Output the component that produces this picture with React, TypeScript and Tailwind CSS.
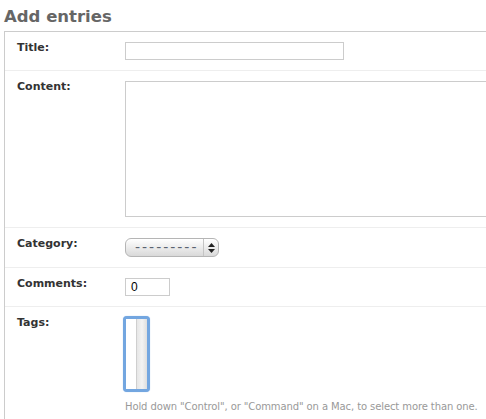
import * as React from "react";

function FormRow(props: { label: string; children: React.ReactNode; last?: boolean }) {
  return (
    <div
      className={
        "flex pl-[12px] pt-[10px] pb-[10px] " +
        (props.last ? "" : "border-b border-[#eee]")
      }
    >
      <label className="w-[108px] shrink-0 text-[11px] leading-[12px] font-bold text-[#333]">
        {props.label}
      </label>
      <div className="flex flex-col">{props.children}</div>
    </div>
  );
}

function AquaSelect() {
  return (
    <div className="flex h-[19px] w-[94px] items-center rounded-[6px] border border-[#b5b5b5] bg-gradient-to-b from-[#ffffff] via-[#ececec] to-[#d9d9d9] shadow-[inset_0_1px_0_#fff]">
      <div className="flex-1 overflow-hidden whitespace-nowrap pl-[9px] text-[14px] leading-[17px] tracking-[2px] text-[#5a6270]">
        ---------
      </div>
      <div className="flex h-full w-[15px] shrink-0 flex-col items-center justify-center gap-[2px] border-l border-[#c4c4c4]">
        <svg width="7" height="4" viewBox="0 0 7 4">
          <path d="M3.5 0L7 4H0z" fill="#222" />
        </svg>
        <svg width="7" height="4" viewBox="0 0 7 4">
          <path d="M0 0h7L3.5 4z" fill="#222" />
        </svg>
      </div>
    </div>
  );
}

function MultiSelect() {
  return (
    <div className="-ml-[2px] -mt-[1px] h-[76px] w-[27px] rounded-[4px] border-[3px] border-[#73a6e0] bg-white shadow-[0_0_1px_#9cc2ec]">
      <div className="flex h-full">
        <div className="w-[10px] bg-white" />
        <div className="flex-1 border-l border-[#cfcfcf] bg-gradient-to-r from-[#e6e6e6] via-[#f3f3f3] to-[#dedede]" />
      </div>
    </div>
  );
}

export default function App() {
  return (
    <div className="relative h-[419px] w-[486px] overflow-hidden bg-white font-['DejaVu_Sans',sans-serif]">
      <h1 className="h-[31px] pl-[4px] pt-[6px] text-[16.5px] leading-[22px] font-bold text-[#666]">
        Add entries
      </h1>
      <div className="ml-[4px] w-[720px] border-l border-t border-[#ccc]">
        <FormRow label="Title:">
          <div className="h-[18px] w-[219px] border border-[#ccc] bg-white" />
        </FormRow>
        <FormRow label="Content:">
          <div className="h-[136px] w-[560px] border border-[#ccc] bg-white" />
        </FormRow>
        <FormRow label="Category:">
          <AquaSelect />
        </FormRow>
        <FormRow label="Comments:">
          <div className="h-[18px] w-[45px] border border-[#ccc] bg-white pl-[5px] font-['Liberation_Sans',sans-serif] text-[12px] leading-[16px] text-black">
            0
          </div>
        </FormRow>
        <FormRow label="Tags:" last>
          <MultiSelect />
          <p className="mt-[8px] whitespace-nowrap text-[10px] leading-[14px] tracking-[-0.1px] text-[#999]">
            Hold down "Control", or "Command" on a Mac, to select more than one.
          </p>
        </FormRow>
      </div>
    </div>
  );
}
